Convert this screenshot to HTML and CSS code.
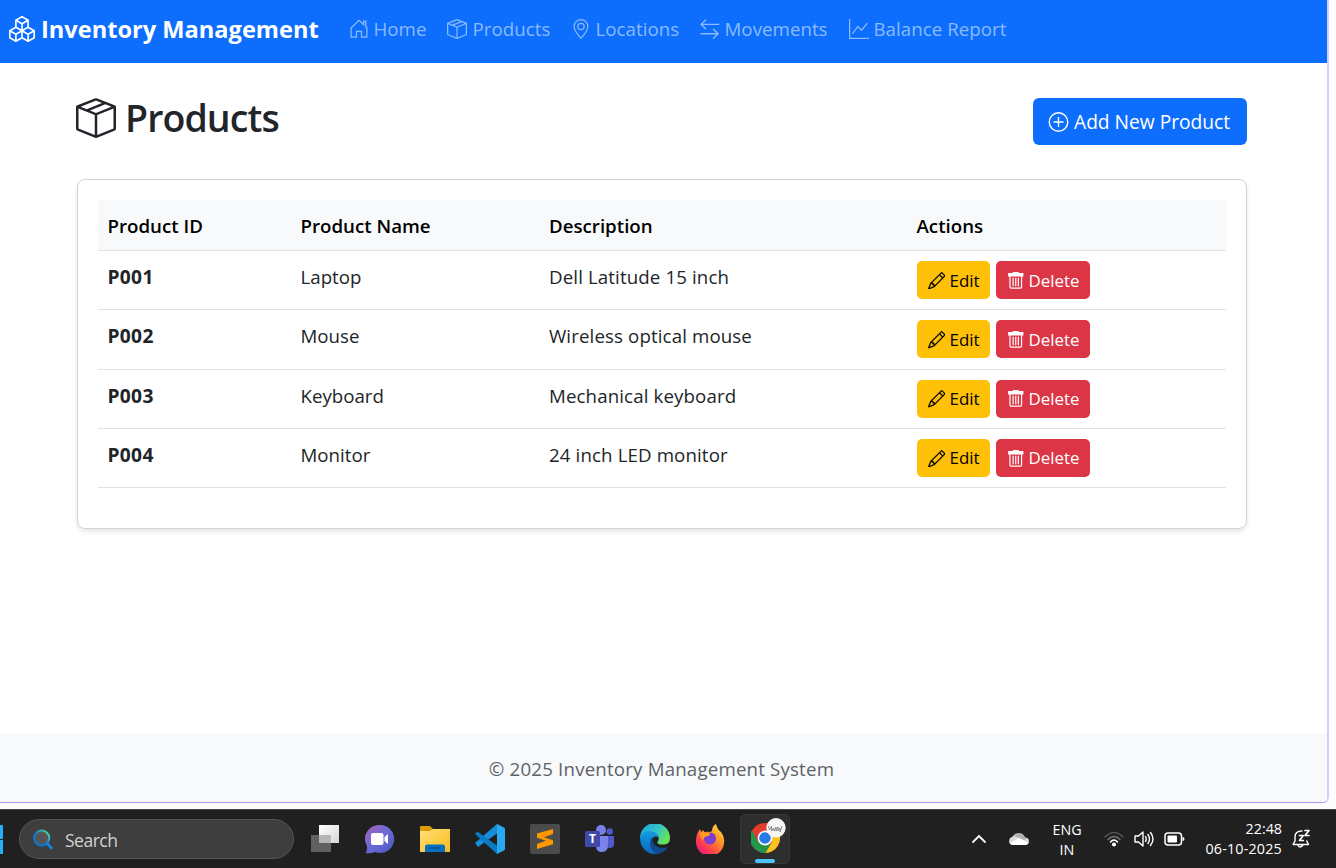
FILE: index.html
```
<!DOCTYPE html>
<html lang="en">
<head>
<meta charset="utf-8">
<title>Products - Inventory Management</title>
<link rel="stylesheet" href="styles.css">
</head>
<body>
<svg width="0" height="0" class="defs">
  <symbol id="boxes" viewBox="0 0 16 16"><path d="M7.752.066a.5.5 0 0 1 .496 0l3.75 2.143a.5.5 0 0 1 .252.434v3.995l3.498 2A.5.5 0 0 1 16 9.07v4.286a.5.5 0 0 1-.252.434l-3.75 2.143a.5.5 0 0 1-.496 0l-3.502-2-3.502 2.001a.5.5 0 0 1-.496 0l-3.75-2.143A.5.5 0 0 1 0 13.357V9.071a.5.5 0 0 1 .252-.434L3.75 6.638V2.643a.5.5 0 0 1 .252-.434zM4.25 7.504 1.508 9.071l2.742 1.567 2.742-1.567zM7.5 9.933l-2.75 1.571v3.134l2.75-1.571zm1 3.134 2.75 1.571v-3.134L8.5 9.933zm.508-3.996 2.742 1.567 2.742-1.567-2.742-1.567zm2.242-2.433V3.504L8.5 5.076V8.21zM7.5 8.21V5.076L4.75 3.504v3.134zM5.258 2.643 8 4.21l2.742-1.567L8 1.076zM15 9.933l-2.75 1.571v3.134L15 13.067zM3.75 14.638v-3.134L1 9.933v3.134z"/></symbol>
  <symbol id="house" viewBox="0 0 16 16"><path d="M1.200 7.600 8 1l3.800 3.600V1.700h1.700v4.600l1.300 1.300M1.700 7.200v7.300H6V9.800h4v4.700h4.300V7.200" fill="none" stroke="currentColor"/></symbol>
  <symbol id="box" viewBox="0 0 16 16"><path d="M8.186 1.113a.5.5 0 0 0-.372 0L1.846 3.5l2.404.961L10.404 2zm3.564 1.426L5.596 5 8 5.961 14.154 3.5zm3.25 1.7-6.5 2.6v7.922l6.5-2.6V4.24zM7.5 14.762V6.838L1 4.239v7.923zM7.443.184a1.5 1.5 0 0 1 1.114 0l7.129 2.852A.5.5 0 0 1 16 3.5v8.662a1 1 0 0 1-.629.928l-7.185 2.874a.5.5 0 0 1-.372 0L.63 13.09a1 1 0 0 1-.63-.928V3.5a.5.5 0 0 1 .314-.464z"/></symbol>
  <symbol id="geo" viewBox="0 0 16 16"><path d="M12.166 8.94c-.524 1.062-1.234 2.12-1.96 3.07A32 32 0 0 1 8 14.58a32 32 0 0 1-2.206-2.57c-.726-.95-1.436-2.008-1.96-3.07C3.304 7.867 3 6.862 3 6a5 5 0 0 1 10 0c0 .862-.305 1.867-.834 2.94M8 16s6-5.686 6-10A6 6 0 0 0 2 6c0 4.314 6 10 6 10"/><path d="M8 8a2 2 0 1 1 0-4 2 2 0 0 1 0 4m0 1a3 3 0 1 0 0-6 3 3 0 0 0 0 6"/></symbol>
  <symbol id="arrows" viewBox="0 0 16 16"><path d="M5 .4.9 4.300 5 8.200M1 4.300h14.500M10.500 8l4 3.800-4 3.900M.5 11.800h14" fill="none" stroke="currentColor" stroke-width="1.100"/></symbol>
  <symbol id="graph" viewBox="0 0 16 16"><path d="M0 0h1v15h15v1H0zm14.817 3.113a.5.5 0 0 1 .07.704l-4.5 5.5a.5.5 0 0 1-.74.037L7.06 6.767l-3.656 5.027a.5.5 0 0 1-.808-.588l4-5.5a.5.5 0 0 1 .758-.06l2.609 2.61 4.15-5.073a.5.5 0 0 1 .704-.07"/></symbol>
  <symbol id="plus" viewBox="0 0 16 16"><g fill="none" stroke="currentColor" stroke-width="1.100"><circle cx="8" cy="8" r="7.400"/><path d="M8 4v8M4 8h8"/></g></symbol>
  <symbol id="pencil" viewBox="0 0 16 16"><path d="M12.146.146a.5.5 0 0 1 .708 0l3 3a.5.5 0 0 1 0 .708l-10 10a.5.5 0 0 1-.168.11l-5 2a.5.5 0 0 1-.65-.65l2-5a.5.5 0 0 1 .11-.168zM11.207 2.5 13.5 4.793 14.793 3.5 12.5 1.207zm1.586 3L10.5 3.207 4 9.707V10h.5a.5.5 0 0 1 .5.5v.5h.5a.5.5 0 0 1 .5.5v.5h.293zm-9.761 5.175-.106.106-1.528 3.821 3.821-1.528.106-.106A.5.5 0 0 1 5 12.5V12h-.5a.5.5 0 0 1-.5-.5V11h-.5a.5.5 0 0 1-.468-.325" stroke="currentColor" stroke-width=".15"/></symbol>
  <symbol id="trash" viewBox="0 0 16 16"><path d="M5.300 0h5.400v1H15v3H1V1h4.300z"/><path d="M2.700 3.500v10.300q0 1 1 1h8.600q1 0 1-1V3.500M5.600 5.200v7.800M8 5.200v7.800M10.400 5.200v7.800" fill="none" stroke="currentColor" stroke-width="1.100"/></symbol>
</svg>
<div class="browser">
  <div class="page">
    <nav class="navbar">
      <a class="brand"><svg class="i26"><use href="#boxes"/></svg><span>Inventory Management</span></a>
      <a class="link home"><svg class="i20"><use href="#house"/></svg><span>Home</span></a>
      <a class="link products"><svg class="i20"><use href="#box"/></svg><span>Products</span></a>
      <a class="link locations"><svg class="i20"><use href="#geo"/></svg><span>Locations</span></a>
      <a class="link movements"><svg class="i20"><use href="#arrows"/></svg><span>Movements</span></a>
      <a class="link report"><svg class="i20"><use href="#graph"/></svg><span>Balance Report</span></a>
    </nav>
    <main class="content">
      <header class="heading">
        <h1><svg class="i40"><use href="#box"/></svg><span>Products</span></h1>
        <a class="add"><svg class="i20"><use href="#plus"/></svg><span>Add New Product</span></a>
      </header>
      <section class="card">
        <div class="row head"><div>Product ID</div><div>Product Name</div><div>Description</div><div>Actions</div></div>
        <div class="row"><div class="pid">P001</div><div>Laptop</div><div class="desc">Dell Latitude 15 inch</div><div class="actions"><a class="btn edit"><svg class="i18"><use href="#pencil"/></svg>Edit</a><a class="btn del"><svg class="i18"><use href="#trash"/></svg>Delete</a></div></div>
        <div class="row"><div class="pid">P002</div><div>Mouse</div><div class="desc">Wireless optical mouse</div><div class="actions"><a class="btn edit"><svg class="i18"><use href="#pencil"/></svg>Edit</a><a class="btn del"><svg class="i18"><use href="#trash"/></svg>Delete</a></div></div>
        <div class="row"><div class="pid">P003</div><div>Keyboard</div><div class="desc">Mechanical keyboard</div><div class="actions"><a class="btn edit"><svg class="i18"><use href="#pencil"/></svg>Edit</a><a class="btn del"><svg class="i18"><use href="#trash"/></svg>Delete</a></div></div>
        <div class="row"><div class="pid">P004</div><div>Monitor</div><div class="desc">24 inch LED monitor</div><div class="actions"><a class="btn edit"><svg class="i18"><use href="#pencil"/></svg>Edit</a><a class="btn del"><svg class="i18"><use href="#trash"/></svg>Delete</a></div></div>
      </section>
    </main>
    <footer class="footer"><span>© 2025 Inventory Management System</span></footer>
  </div>
</div>
<div class="taskbar">
  <div class="start"><i></i><i></i></div>
  <div class="search">
    <svg width="20" height="21" viewBox="0 0 20 21"><defs><linearGradient id="lens" x1="0" y1="1" x2="1" y2="0"><stop offset=".45" stop-color="#0a78d7"/><stop offset="1" stop-color="#5fe08a"/></linearGradient></defs><circle cx="8.700" cy="9" r="7.500" fill="#555" stroke="url(#lens)" stroke-width="2.200"/><path d="m14 14.500 4.500 4.500" stroke="#1683df" stroke-width="2.600" stroke-linecap="round"/></svg>
    <span>Search</span>
  </div>
  <div class="apps">
    <svg class="app" viewBox="0 0 30 30"><defs><linearGradient id="tv" x1="0" y1="0" x2="1" y2="1"><stop stop-color="#fff"/><stop offset="1" stop-color="#d5d5d5"/></linearGradient></defs><path d="M1 11h20v17H1z" fill="#606060"/><path d="M9 1h20v18H9z" fill="url(#tv)"/><path d="M9 11h12v8H9z" fill="#b5b5b5"/></svg>
    <svg class="app" viewBox="0 0 30 30"><defs><linearGradient id="chat" x1="0" y1="0" x2="1" y2="1"><stop stop-color="#a964b8"/><stop offset=".5" stop-color="#6b69d6"/><stop offset="1" stop-color="#4a54bd"/></linearGradient></defs><path d="M15 1a14 14 0 1 1-5 27Q5 30 .5 29q2-2 1.500-7A14 14 0 0 1 15 1z" fill="url(#chat)"/><rect x="6" y="9" width="12.500" height="12" rx="2" fill="#fff"/><path d="m19.500 13 3.500-3v10l-3.500-3z" fill="#fff"/></svg>
    <svg class="app" viewBox="0 0 30 30"><defs><linearGradient id="fold" x1="0" y1="0" x2="1" y2="1"><stop stop-color="#ffe07a"/><stop offset="1" stop-color="#fabb18"/></linearGradient></defs><path d="M0 3q0-1 1-1h9l3 3h5v6H0z" fill="#dd9b08"/><path d="M0 7h10l3-2h17v23H0z" fill="url(#fold)"/><path d="M5 28v-5.500q0-2 2-2h16q2 0 2 2V28z" fill="#0870c2"/><path d="M9 24h12" stroke="#05539a" stroke-width="1.300"/></svg>
    <svg class="app" viewBox="0 0 30 30"><path d="m0 19 22-19 2 8L3 23z" fill="#168edb"/><path d="M0 10q1-2 3-2l21 15-2 7z" fill="#087bc4"/><path d="m22 0 7 3.500q1 .5 1 1.500v20q0 1-1 1.500L22 30z" fill="#28a9f1"/></svg>
    <svg class="app" viewBox="0 0 30 30"><rect width="30" height="30" rx="2" fill="#4b4b4b"/><path d="M23 5v5l-9 3.300 9 3v4L7 25v-5l9-3.300-9-3V9.500z" fill="#ff9800"/></svg>
    <svg class="app" viewBox="0 0 30 30"><circle cx="16" cy="6" r="5" fill="#7880e8"/><circle cx="24.700" cy="7.500" r="3.200" fill="#5059c9"/><path d="M20 12h9v8q0 4-4.500 4L20 23z" fill="#5059c9"/><path d="M11 12h12v9q0 7-6 7t-6-6z" fill="#7b83eb"/><rect y="7" width="15" height="16" rx="1.500" fill="#4149a8"/><text x="7.500" y="19.300" class="tlogo" text-anchor="middle">T</text></svg>
    <svg class="app" viewBox="0 0 30 30"><defs><linearGradient id="e1" x1="0" y1="0" x2="1" y2=".5"><stop stop-color="#1a9fe0"/><stop offset=".6" stop-color="#35c5c7"/><stop offset="1" stop-color="#68e35a"/></linearGradient><linearGradient id="e2" x1="0" y1="0" x2="0" y2="1"><stop stop-color="#139cdf"/><stop offset="1" stop-color="#0868bd"/></linearGradient></defs><path d="M0 14A15 15 0 0 1 30 14q0 6-6 6.500c-5 .5-8-1-6-3.500q2-3-1-6-6-4-17 3z" fill="url(#e1)"/><path d="M0 14q2-7 9-7 8 0 10 6-6-2-7 3-1 8 8 13Q15 31 9 29 0 24 0 14z" fill="url(#e2)"/><path d="M12 13q-5 9 3 16 8 2 13-6-6 2-11-.5-5-3-5-9.500z" fill="#114a8c"/></svg>
    <svg class="app" viewBox="0 0 30 30"><defs><linearGradient id="fx" x1="1" y1="0" x2=".2" y2="1"><stop stop-color="#fff04a"/><stop offset=".4" stop-color="#ff9623"/><stop offset=".75" stop-color="#ff3d4f"/><stop offset="1" stop-color="#e31587"/></linearGradient></defs><path d="M17 7q0-5 4-7 1 5 5 8 4 5 3 11a14 14 0 0 1-28-2Q1 10 5 5l2 4q4-2 8-1z" fill="url(#fx)"/><circle cx="15" cy="14.500" r="6" fill="#7a3fd0"/><path d="M5 9q2-1 3-3l2 3 5 0-1 3q-5 0-6 4-4-3-3-7z" fill="#ff9b22"/></svg>
    <div class="active">
      <svg width="36" height="38" viewBox="0 0 36 38"><circle cx="14" cy="20" r="15" fill="#e33b2e"/><path d="M1 12.500 7.500 24l6.500 3.500-3 7.200A15 15 0 0 1 1 12.500z" fill="#23964a"/><path d="M20.500 13h6.800A15 15 0 0 1 14 35l7-11z" fill="#fcc31e"/><path d="M10.500 34.600 14 27.500l6-2L14.500 35z" fill="#23964a"/><circle cx="14" cy="20" r="7.400" fill="#fff"/><circle cx="14" cy="20" r="5.800" fill="#2879e8"/><circle cx="25" cy="9.800" r="9.700" fill="#f6f6f6"/><path d="m17.500 8 1 4 2-4v5l2-3 .5 3 2-4v4l2-4v4l2-3v4l2-6" fill="none" stroke="#777" stroke-width=".8"/></svg>
      <b></b>
    </div>
  </div>
  <div class="tray">
    <svg width="16" height="10" viewBox="0 0 16 10"><path d="m2 8 6-6 6 6" fill="none" stroke="#fff" stroke-width="1.800" stroke-linecap="round"/></svg>
    <svg class="cloud" width="20" height="14" viewBox="0 0 20 14"><path d="M3 6a7 7 0 0 1 13-1q4 1 4 5 0 3-4 3H4q-4 0-4-4 0-2 3-3z" fill="#b0b0b0"/><path d="m1 6 4-2 10 4 4-2q2 6-3 7H4q-5-1-3-7z" fill="#ddd"/><path d="m1 11 9-5 9 5q-1 2-3 2H4q-2 0-3-2z" fill="#fff"/></svg>
    <div class="lang">ENG<br>IN</div>
    <svg class="wifi" width="20" height="16" viewBox="0 0 20 16"><g fill="none" stroke-width="1.500" stroke-linecap="round"><path d="M1 6q9-9 18 0" stroke="#555"/><path d="M4 8.500q6-6 12 0" stroke="#777"/><path d="M6.500 11q3.500-4 7 0" stroke="#fff"/></g><circle cx="10" cy="13.500" r="2" fill="#fff"/></svg>
    <svg class="sound" width="21" height="18" viewBox="0 0 21 18"><g fill="none" stroke="#fff" stroke-width="1.400" stroke-linejoin="round" stroke-linecap="round"><path d="M1 6h3.500L9 2v14l-4.500-4H1zM11.500 6.500q1.500 2.500 0 5M14 4.500q3 4.500 0 9M16.500 2.500q5 6.500 0 13"/></g></svg>
    <svg class="battery" width="21" height="14" viewBox="0 0 21 14"><rect x="1" y="1" width="16.500" height="12" rx="3" fill="none" stroke="#fff" stroke-width="1.500"/><rect x="3.500" y="3.500" width="9.500" height="7" rx="1" fill="#fff"/><path d="M18.500 5q2 0 2 2t-2 2z" fill="#fff"/></svg>
    <div class="clock">22:48<br><span>06-10-2025</span></div>
    <svg class="bell" width="19" height="20" viewBox="0 0 19 20"><g fill="none" stroke="#fff" stroke-width="1.400" stroke-linecap="round" stroke-linejoin="round"><path d="M10 2Q3 2 3 8v4l-2 3.500h15.500L14.800 12M6 16q1.500 4 5 0"/><path d="M7.500 6.500h3.800l-3.800 5h3.800M13 1.500h4l-4 5h4" stroke-width="1.700"/></g></svg>
  </div>
</div>
</body>
</html>
```
FILE: styles.css
```
* { box-sizing: border-box; }
body { margin: 0; width: 1336px; height: 868px; overflow: hidden; font-family: "Open Sans", "Noto Sans", sans-serif; font-size: 18.700px; line-height: 30px; color: #212529; background: #fcfcfd; }
svg { display: block; flex: none; fill: currentColor; }
.defs { position: absolute; }
.i18 { width: 17.500px; height: 17.500px; }
.i20 { width: 21px; height: 20px; }
.i26 { width: 26px; height: 26px; }
.i40 { width: 40px; height: 40px; }
.browser { height: 809px; }
.page { width: 1329px; height: 803px; display: flex; flex-direction: column; overflow: hidden; background: #fff; border-right: 2px solid #d5cdfc; border-bottom: 1px solid #a99bf5; border-bottom-right-radius: 6px; }
.navbar { height: 63px; display: flex; align-items: center; padding: 0 0 5px 8.500px; background: #0d6efd; flex: none; white-space: nowrap; margin-right: -2px; border-right: 2px solid #5a8bfd; }
.brand, .link, .add, h1 { display: flex; align-items: center; }
.brand { width: 340px; gap: 6.500px; color: #fff; font-weight: 700; font-size: 23.600px; }
.link { gap: 5px; color: #8bbafe; letter-spacing: .04px; }
.link svg { width: 20px; }
.home { width: 98px; }
.products { width: 124px; gap: 6px; }
.locations { width: 129px; }
.movements { width: 149px; }
.content { flex: 1; padding: 35px 80px 0 77px; }
.heading { display: flex; justify-content: space-between; height: 81px; align-items: flex-start; }
h1 { margin: 0 0 0 -1px; gap: 9px; font-size: 37.500px; font-weight: 600; line-height: 40px; letter-spacing: -.9px; }
.add { width: 214px; height: 47px; padding-left: 15px; gap: 5px; border-radius: 6px; background: #0d6efd; color: #fff; white-space: nowrap; font-size: 19.200px; }
.card { height: 350px; padding: 20px; border: 1px solid #d0d2d4; border-radius: 8px; box-shadow: 0 3px 5px rgba(0,0,0,.09); }
.row { display: grid; grid-template-columns: 193px 248.500px 367.500px 1fr; height: 59.250px; border-bottom: 1px solid #dee2e6; }
.row > div { padding: 11px 0 0 9.500px; white-space: nowrap; }
.row .desc { letter-spacing: .12px; }
.head { height: 51px; background: #f8f9fa; color: #000; font-weight: 600; }
.row .pid { font-weight: 700; font-size: 19.200px; letter-spacing: .3px; }
.row .actions { display: flex; gap: 6px; padding: 10px 0 0 10px; }
.btn { display: flex; align-items: center; height: 38px; gap: 4.500px; padding: 1px 0 0 10.500px; border-radius: 5px; font-size: 16.900px; }
.edit { width: 73px; background: #ffc107; color: #000; }
.del { width: 94px; background: #dc3545; color: #fff; }
.footer { height: 69px; display: flex; align-items: center; justify-content: center; padding: 3px 4px 0 0; background: #f8f9fa; color: #5c6268; letter-spacing: .18px; }
.taskbar { height: 59px; display: flex; align-items: center; background: #202020; border-top: 1px solid #454545; color: #fff; }
.start { width: 19px; display: grid; gap: 1px; }
.start i { width: 3px; height: 14px; background: #24aef7; }
.search { width: 275px; height: 40px; display: flex; align-items: center; gap: 12px; padding: 1px 0 0 13px; border: 1px solid #555; border-radius: 20px; background: #3e3e3e; color: #d2d2d2; font-size: 17.500px; letter-spacing: -.65px; }
.search span { letter-spacing: -.5px; }
.apps { margin-left: 16px; display: flex; align-items: center; gap: 25px; }
.app { width: 30px; height: 30px; }
.tlogo { font: 700 12px "Open Sans", sans-serif; fill: #fff; }
.active { width: 50px; height: 50px; margin-left: -10px; padding: 3px 0 0 10px; border-radius: 5px; background: #2e2e2e; border: 1px solid #373737; }
.active b { display: block; width: 20px; height: 4px; margin: 3px 0 0 4px; border-radius: 2px; background: #4cc2ff; }
.tray { margin-left: 181px; display: flex; align-items: center; }
.cloud { margin-left: 22px; }
.lang { width: 40px; margin-left: 18px; padding-top: 1px; text-align: center; font-size: 14.300px; line-height: 20px; }
.wifi { margin-left: 17px; }
.sound { margin-left: 10px; }
.battery { margin-left: 9px; }
.clock { width: 82px; margin-left: 15px; text-align: right; font-size: 14.300px; line-height: 20px; white-space: nowrap; }
.clock span { letter-spacing: .2px; }
.bell { margin-left: 10px; }
```
